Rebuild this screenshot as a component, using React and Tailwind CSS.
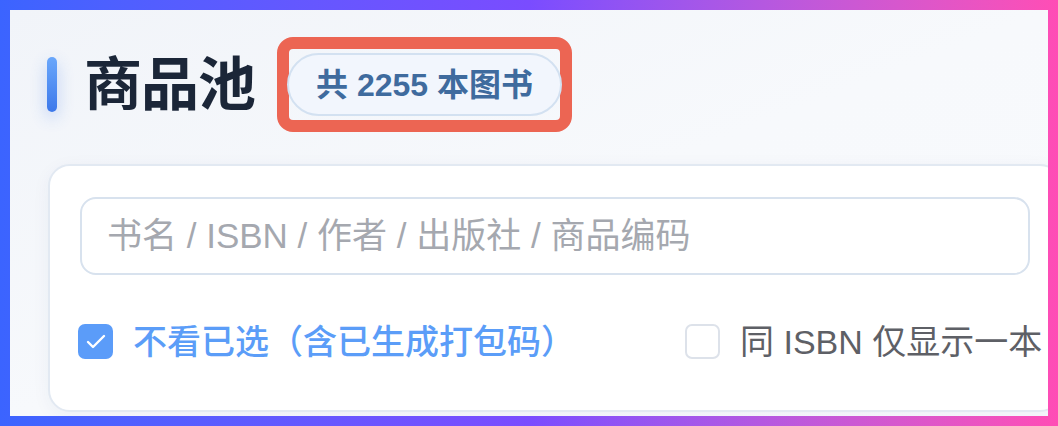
import { Check } from 'lucide-react'

const FONT = { fontFamily: '"Liberation Sans", "Noto Sans CJK SC", sans-serif' }

function Checkbox({ checked, label, className }) {
  return (
    <label className={`flex items-center gap-[20px] ${className}`}>
      {checked ? (
        <span className="w-[35px] h-[35px] rounded-[7px] bg-[#5b9cf9] flex items-center justify-center flex-shrink-0">
          <Check size={24} strokeWidth={2.4} className="text-white" />
        </span>
      ) : (
        <span className="w-[35px] h-[35px] rounded-[7px] border-2 border-[#dde2ea] bg-white flex-shrink-0" />
      )}
      <span
        className={`text-[34px] leading-none whitespace-nowrap ${
          checked ? 'text-[#5b9df8] font-medium' : 'text-[#5e6066]'
        }`}
      >
        {label}
      </span>
    </label>
  )
}

export default function App() {
  return (
    <div
      className="w-[1058px] h-[426px] p-[10px] bg-gradient-to-r from-[#3b64ff] via-[#7a4cff] to-[#ff4db5]"
      style={FONT}
    >
      <div className="h-full bg-gradient-to-br from-[#f1f4f9] via-[#f7f9fc] to-[#f8fafd] overflow-hidden pl-[37px] pt-[27px]">
        {/* Title row */}
        <div className="flex items-center h-[95px]">
          <div className="w-[10px] h-[55px] rounded-full bg-gradient-to-b from-[#6aa7fb] to-[#3d78ea] shadow-[0_6px_16px_rgba(59,120,234,0.3)]" />
          <h1 className="ml-[27px] text-[58px] leading-none font-bold text-[#1b2638] tracking-[-1px]">
            商品池
          </h1>
          {/* Highlight box */}
          <div className="ml-[22px] border-[12px] border-[#ec6553] rounded-[16px] py-[3px] h-[95px] flex items-center">
            <div className="h-[63px] px-[27px] -mx-[2px] rounded-full border-2 border-[#d3e1f1] bg-[#f2f6fd] flex items-center">
              <span className="text-[32px] font-bold text-[#3f6b9e] leading-none whitespace-nowrap">
                共 2255 本图书
              </span>
            </div>
          </div>
        </div>

        {/* Filter card */}
        <div className="mt-[32px] ml-[1px] w-[1014px] h-[248px] bg-white border-2 border-[#e2e9f2] rounded-[22px] shadow-[0_4px_18px_rgba(30,60,120,0.05)] pt-[31px] px-[30px]">
          <div className="h-[78px] border-2 border-[#d8e2ee] rounded-[16px] flex items-center pl-[25px]">
            <input
              className="w-full bg-transparent outline-none text-[35px] placeholder:text-[#a5a8af]"
              placeholder="书名 / ISBN / 作者 / 出版社 / 商品编码"
              style={FONT}
            />
          </div>
          <div className="mt-[49px] flex items-center">
            <Checkbox checked label="不看已选（含已生成打包码）" className="-ml-[2px]" />
            <Checkbox label="同 ISBN 仅显示一本" className="ml-[110px]" />
          </div>
        </div>
      </div>
    </div>
  )
}
